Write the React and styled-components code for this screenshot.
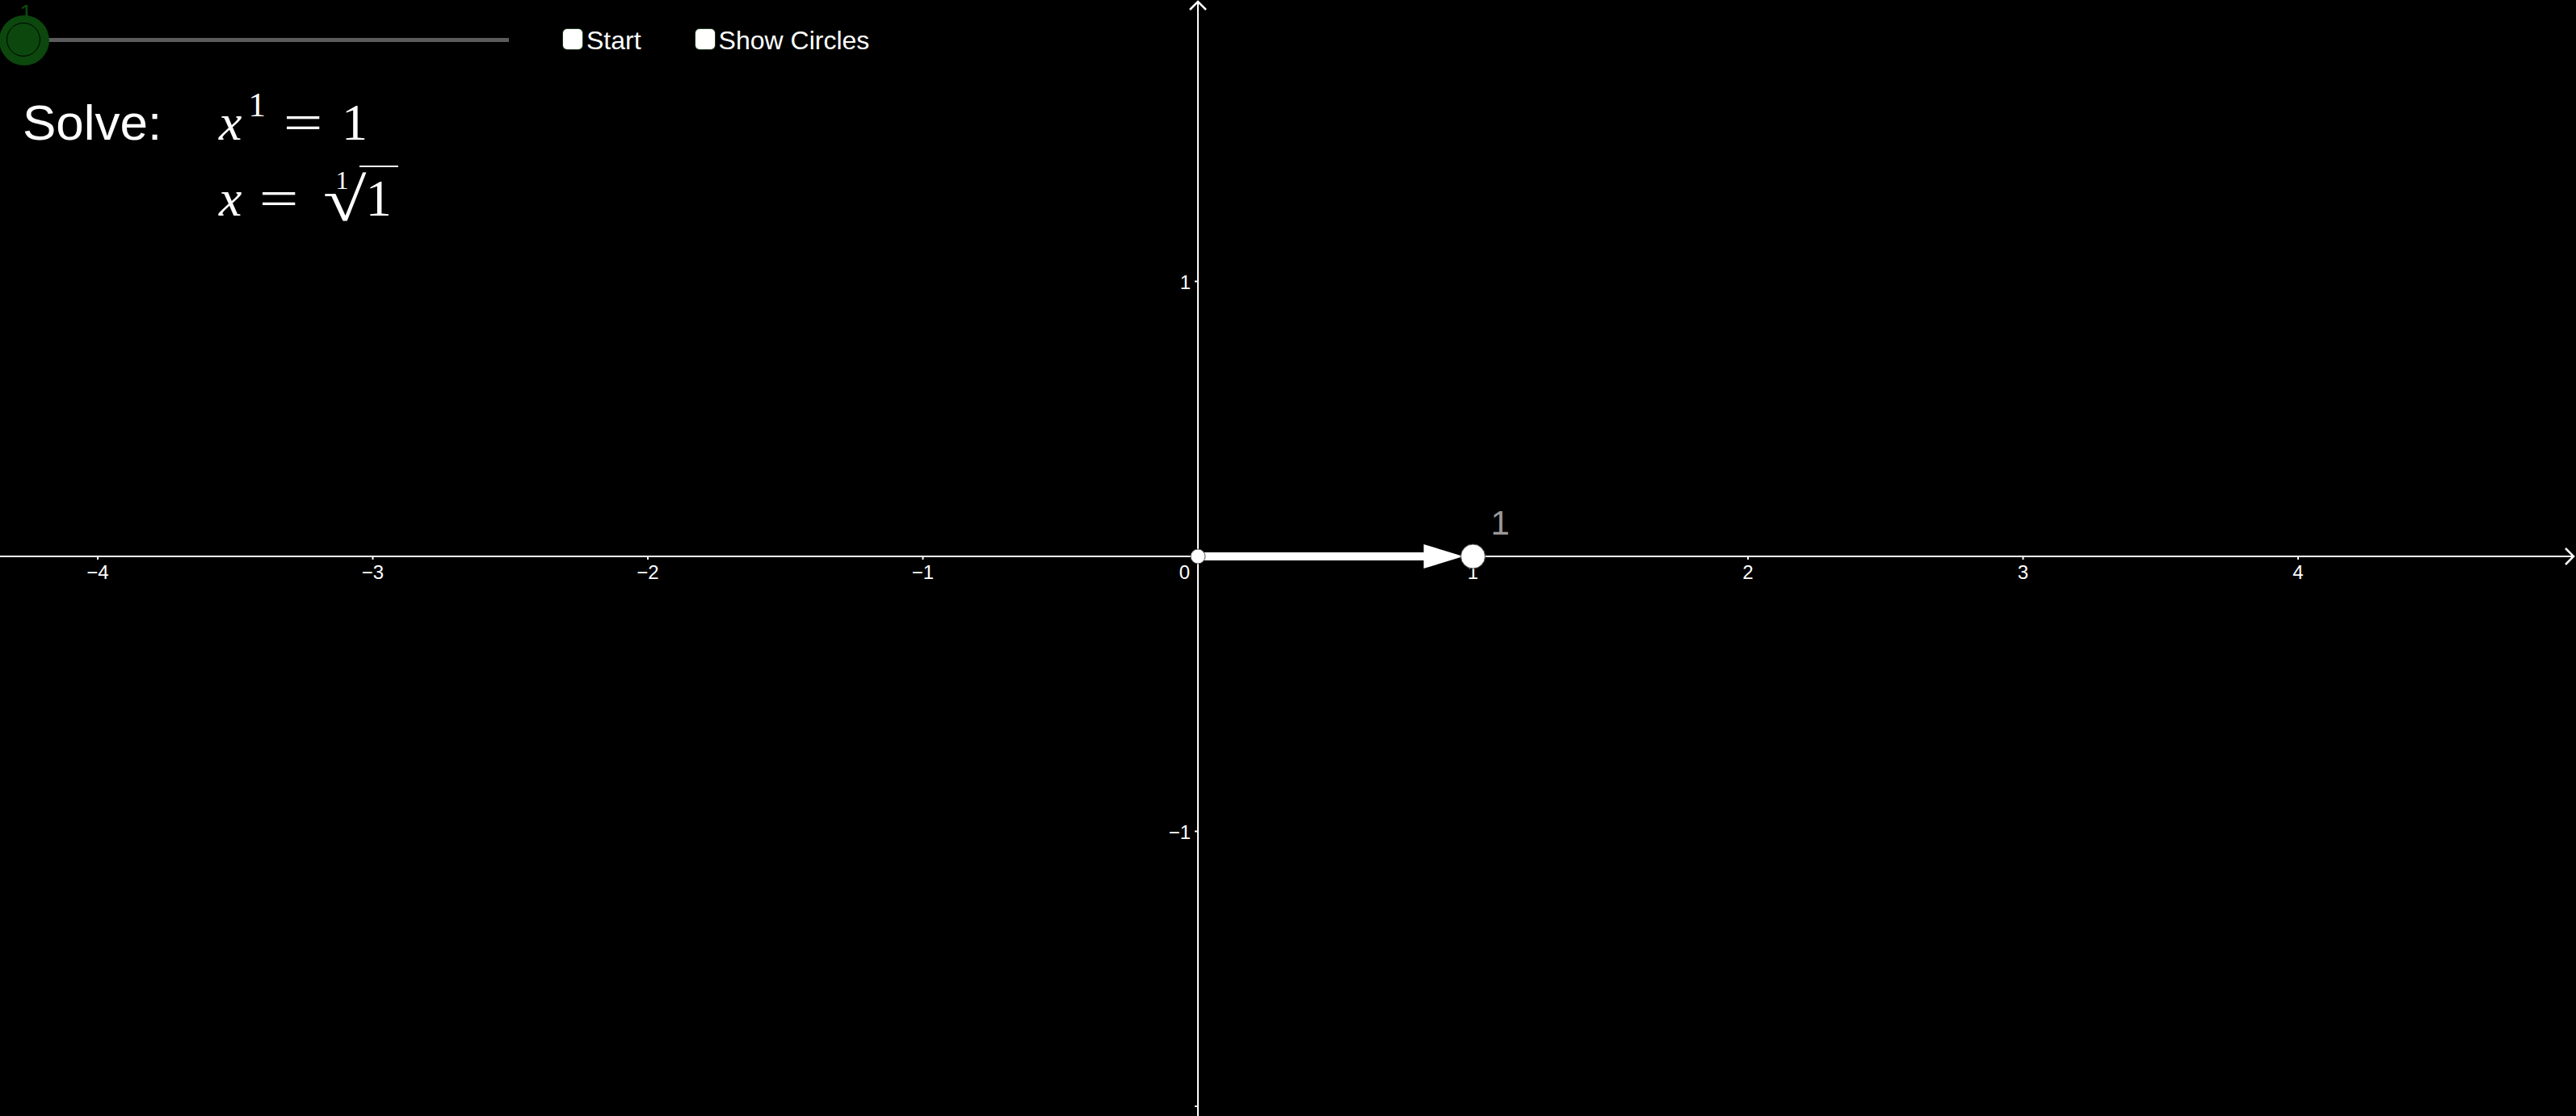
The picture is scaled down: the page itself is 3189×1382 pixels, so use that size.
import React from 'react';
import styled, { createGlobalStyle } from 'styled-components';

const WIDTH = 3189;
const HEIGHT = 1382;
const ORIGIN = { x: 1483, y: 689 };
const UNIT = 340.5;

const xTicks = [-4, -3, -2, -1, 1, 2, 3, 4];
const yTicks = [1, -1, -2];
const fmt = (n) => (n < 0 ? `\u2212${-n}` : `${n}`);

const GlobalStyle = createGlobalStyle`
  html, body {
    margin: 0;
    padding: 0;
    background: #000;
    overflow: hidden;
  }
  #root {
    width: 100vw;
    height: 100vh;
  }
`;

const Applet = styled.div`
  position: relative;
  width: 100%;
  height: 100%;
  background: #000;
  font-family: "Liberation Sans", Arial, sans-serif;
  color: #fff;
  overflow: hidden;
`;

const GraphCanvas = styled.svg`
  display: block;
  width: 100%;
  height: 100%;
`;

const AxisLine = styled.line`
  stroke: #fff;
  stroke-width: 2;
`;

const AxisArrow = styled.polyline`
  fill: none;
  stroke: #fff;
  stroke-width: 2.5;
`;

const TickMark = styled.line`
  stroke: #fff;
  stroke-width: 2;
`;

const TickLabel = styled.text`
  fill: #fff;
  font-family: "Liberation Sans", Arial, sans-serif;
  font-size: 24px;
  text-anchor: ${(p) => p.$anchor || 'middle'};
`;

const VectorShaft = styled.line`
  stroke: #fff;
  stroke-width: 10;
`;

const VectorHead = styled.polygon`
  fill: #fff;
`;

const Point = styled.circle`
  fill: #fff;
  stroke: #555;
  stroke-width: 1;
`;

const PointLabel = styled.text`
  fill: #999;
  font-family: "Liberation Sans", Arial, sans-serif;
  font-size: 42px;
`;

const Overlay = styled.div`
  position: absolute;
  top: 0;
  left: 0;
  display: flex;
  flex-direction: column;
`;

const ControlBar = styled.div`
  display: flex;
  align-items: center;
  gap: 67px;
  height: 100px;
`;

const Slider = styled.div`
  position: relative;
  display: flex;
  align-items: center;
  width: 600px;
  height: 100px;
  padding-left: 30px;
`;

const SliderTrack = styled.div`
  flex: 1;
  height: 5px;
  margin-bottom: 1px;
  background: #5c5c5c;
`;

const SliderKnob = styled.div`
  position: absolute;
  left: -1px;
  top: 19px;
  width: 62px;
  height: 62px;
  border-radius: 50%;
  background: #0c470d;

  &::after {
    content: '';
    position: absolute;
    left: 9px;
    top: 9px;
    width: 42px;
    height: 42px;
    border-radius: 50%;
    border: 1.5px solid #000;
    box-sizing: border-box;
  }
`;

const SliderValue = styled.span`
  position: absolute;
  left: 24px;
  top: 1px;
  font-size: 30px;
  line-height: 30px;
  color: #0c470d;
`;

const CheckItem = styled.label`
  display: flex;
  align-items: center;
  gap: 5px;
  cursor: pointer;
`;

const CheckBox = styled.span`
  display: block;
  width: 24px;
  height: 25px;
  margin-bottom: 4px;
  border-radius: 5px;
  background: #fff;
  box-shadow: 0 0 0 1px #1d3a1d;
`;

const CheckLabel = styled.span`
  font-size: 32px;
  line-height: 32px;
  color: #fff;
`;

const SolveGrid = styled.div`
  display: grid;
  grid-template-columns: 241px auto;
  align-items: baseline;
  row-gap: 12px;
  margin-top: 12px;
  padding-left: 28px;
`;

const SolveLabel = styled.div`
  font-size: 62px;
  line-height: 80px;
  color: #fff;
`;

const MathLine = styled.div`
  grid-column: 2;
  display: flex;
  align-items: baseline;
  font-family: "Liberation Serif", "Times New Roman", serif;
  font-size: 64px;
  line-height: 80px;
  color: #fff;
`;

const MathVar = styled.span`
  font-style: italic;
  margin-left: 2px;
`;

const MathSup = styled.span`
  font-size: 43px;
  line-height: 1;
  margin-left: 8px;
  position: relative;
  top: -29px;
`;

const MathOp = styled.span`
  display: inline-block;
  margin: 0 30px 0 28px;
  transform: scaleX(1.35);
`;

const MathNum = styled.span`
  display: inline-block;
`;

const Radical = styled.span`
  position: relative;
  display: inline-flex;
  align-items: baseline;
  margin-left: 6px;
`;

const RadicalSign = styled.span`
  display: inline-block;
  font-size: 75px;
  line-height: 1;
  transform-origin: left bottom;
  transform: translateY(6px) scaleX(1.3);
`;

const RadicalIndex = styled.span`
  position: absolute;
  left: 16px;
  bottom: 46px;
  font-size: 32px;
  line-height: 32px;
`;

const Radicand = styled.span`
  display: inline-block;
  line-height: 78px;
  margin-left: 4px;
  padding: 0 8px 0 8px;
  border-top: 2px solid #fff;
`;

const CheckControl = ({ label }) => (
  <CheckItem>
    <CheckBox />
    <CheckLabel>{label}</CheckLabel>
  </CheckItem>
);

const Graph = () => {
  const px = (v) => ORIGIN.x + v * UNIT;
  const py = (v) => ORIGIN.y - v * UNIT;
  return (
    <GraphCanvas viewBox={`0 0 ${WIDTH} ${HEIGHT}`} preserveAspectRatio="none">
      <AxisLine x1={0} y1={ORIGIN.y} x2={WIDTH - 3} y2={ORIGIN.y} />
      <AxisArrow points={`${WIDTH - 13},${ORIGIN.y - 10} ${WIDTH - 3},${ORIGIN.y} ${WIDTH - 13},${ORIGIN.y + 10}`} />
      <AxisLine x1={ORIGIN.x} y1={HEIGHT} x2={ORIGIN.x} y2={2} />
      <AxisArrow points={`${ORIGIN.x - 10},12 ${ORIGIN.x},2 ${ORIGIN.x + 10},12`} />

      {xTicks.map((t) => (
        <g key={`x${t}`}>
          <TickMark x1={px(t)} y1={ORIGIN.y} x2={px(t)} y2={ORIGIN.y + 4} />
          <TickLabel x={px(t)} y={ORIGIN.y + 28}>{fmt(t)}</TickLabel>
        </g>
      ))}
      <TickLabel x={ORIGIN.x - 10} y={ORIGIN.y + 28} $anchor="end">0</TickLabel>

      {yTicks.map((t) => (
        <g key={`y${t}`}>
          <TickMark x1={ORIGIN.x - 4} y1={py(t)} x2={ORIGIN.x} y2={py(t)} />
          {t > -2 && (
            <TickLabel x={ORIGIN.x - 9} y={py(t) + 9} $anchor="end">{fmt(t)}</TickLabel>
          )}
        </g>
      ))}

      <VectorShaft x1={ORIGIN.x} y1={ORIGIN.y} x2={px(1) - 55} y2={ORIGIN.y} />
      <VectorHead points={`${px(1) - 61},${ORIGIN.y - 15} ${px(1) - 12},${ORIGIN.y} ${px(1) - 61},${ORIGIN.y + 15}`} />
      <Point cx={ORIGIN.x} cy={ORIGIN.y} r={9} />
      <Point cx={px(1)} cy={ORIGIN.y} r={15} />
      <PointLabel x={px(1) + 22} y={ORIGIN.y - 27}>1</PointLabel>
    </GraphCanvas>
  );
};

export default function App() {
  return (
    <>
      <GlobalStyle />
      <Applet>
        <Graph />
        <Overlay>
          <ControlBar>
            <Slider>
              <SliderTrack />
              <SliderKnob />
              <SliderValue>1</SliderValue>
            </Slider>
            <CheckControl label="Start" />
            <CheckControl label="Show Circles" />
          </ControlBar>
          <SolveGrid>
            <SolveLabel>Solve:</SolveLabel>
            <MathLine>
              <MathVar>x</MathVar>
              <MathSup>1</MathSup>
              <MathOp>=</MathOp>
              <MathNum>1</MathNum>
            </MathLine>
            <MathLine>
              <MathVar>x</MathVar>
              <MathOp>=</MathOp>
              <Radical>
                <RadicalSign>√</RadicalSign>
                <RadicalIndex>1</RadicalIndex>
                <Radicand>1</Radicand>
              </Radical>
            </MathLine>
          </SolveGrid>
        </Overlay>
      </Applet>
    </>
  );
}
